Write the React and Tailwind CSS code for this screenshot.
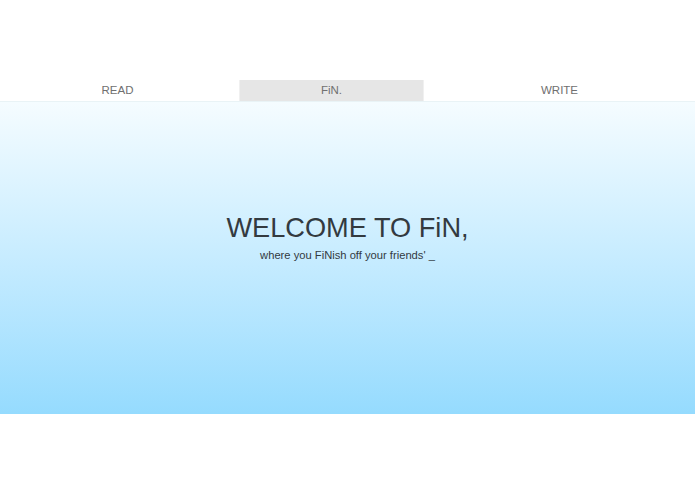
export default function App() {
  return (
    <div className="w-[695px] h-[494px] bg-white" style={{ fontFamily: '"Liberation Sans", Arial, sans-serif' }}>
      <div className="h-[80px]" />
      <nav className="flex h-[21px] text-[11.5px] leading-[20px] text-[#707070]">
        <a className="w-[239px] flex items-center justify-center pr-[4px] pb-[1px]">READ</a>
        <a className="w-[185px] flex items-center justify-center pb-[1px] bg-[#e6e6e6] border-x border-[#f0f0f0]">FiN.</a>
        <a className="flex-1 flex items-center justify-center pb-[1px]">WRITE</a>
      </nav>
      <section className="h-[313px] border-t border-[#e9f3f6] bg-gradient-to-b from-[#f5fcff] to-[#95dbfe] flex flex-col items-center pt-[111px]">
        <h1 className="text-[27.2px] leading-[30px] text-[#333a3f]">WELCOME TO FiN,</h1>
        <p className="text-[11.2px] leading-[14px] mt-[5px] text-[#333a3f]">where you FiNish off your friends' _</p>
      </section>
    </div>
  );
}
